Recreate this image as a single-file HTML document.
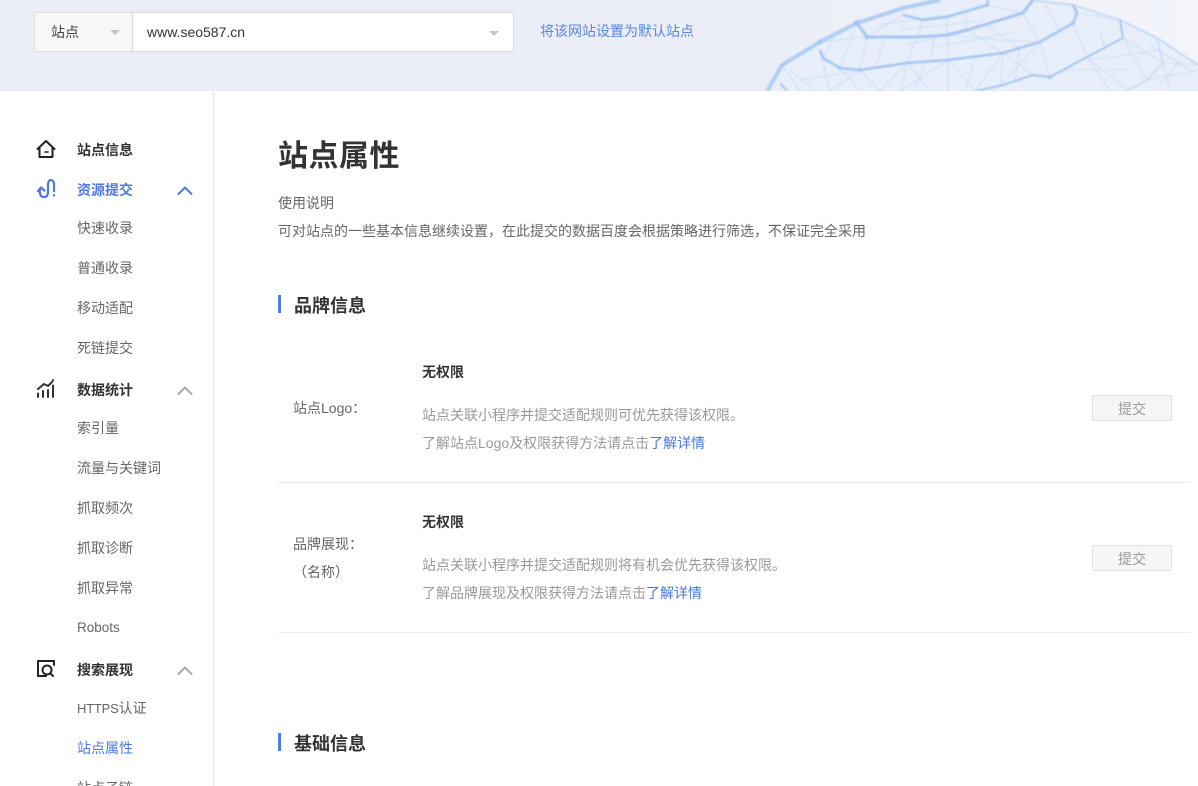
<!DOCTYPE html>
<html lang="zh-CN">
<head>
<meta charset="utf-8">
<title>站点属性</title>
<style>
html{margin:0;padding:0;background:#fff;width:1198px;height:786px;overflow:hidden;}
body{margin:0;padding:0;background:#fff;width:1198px;height:786px;overflow:hidden;position:relative;font-family:"Liberation Sans","Noto Sans CJK SC",sans-serif;font-size:14px;color:#333;}
.t{position:absolute;white-space:nowrap;line-height:20px;height:20px;}
.b{font-weight:700;color:#333;}
.s{color:#666;}
.g{color:#999;}
svg{position:absolute;display:block;}
.tri{position:absolute;width:0;height:0;border-left:5px solid transparent;border-right:5px solid transparent;border-top:5px solid #c4c4c4;}
.hr{position:absolute;left:278px;width:912px;height:1px;background:#ececec;}
.btn{position:absolute;left:1092px;width:78px;height:24px;border:1px solid #e0e0e0;border-radius:2px;background:#f6f6f6;color:#999;text-align:center;line-height:26px;font-size:14px;}
.bar{position:absolute;left:278px;width:3px;height:18px;background:#4a7fe8;}
.h2{font-size:18px;font-weight:700;color:#333;line-height:24px;height:24px;}
.lat{font-size:13px;}
</style>
</head>
<body>
<div style="position:absolute;left:0;top:0;width:1198px;height:91px;background:#eceef7;overflow:hidden;">
<svg width="1198" height="91" style="left:0;top:0">
<defs><linearGradient id="f" x1="0" x2="1" y1="0" y2="0"><stop offset="0" stop-color="#eceef7"/><stop offset="1" stop-color="#f3f5fb"/></linearGradient></defs>
<rect x="740" width="458" height="91" fill="url(#f)"/>
<path d="M767 91L782 65L820 42L857 23L903 8L940 0L1030 0L1073 5L1120 20L1157 38L1198 65V91Z" fill="#e8effa"/>
<g style="filter:blur(0.9px)">
<g stroke="#c6daf5" stroke-width="0.8" fill="none">
<path d="M782 65L800 91M790 70L815 91M820 50L830 91M840 68L860 91M860 70L880 91M907 63L900 91M907 63L930 91M925 62L915 91M948 60L948 91M948 60L975 91M975 57L965 91M1003 53L1000 85M1003 53L1033 75M1020 48L1015 80M1040 42L1050 77M1073 23L1087 57M1087 57L1110 91M1100 30L1105 50M1123 38L1147 80M1163 63L1170 91"/>
<path d="M867 37L860 70M885 37L875 69M917 37L907 63M935 36L930 61M947 35L948 60M967 30L1003 53M985 25L1020 48M1023 13L1040 42M1045 5L1060 30M857 23L840 68M835 35L823 58M903 15L867 37M923 20L917 37M947 17L947 35M965 11L967 30M987 5L1023 13M903 8L903 15M820 42L867 37M1073 5L1077 13M1120 20L1077 13"/>
<path d="M800 80L860 70L830 91M907 63L880 91M948 60L900 91M1003 53L975 91M1040 42L1000 85M1087 57L1050 77M1123 38L1163 63L1198 65M1147 80L1198 70M1087 57L1127 90M907 45L947 35L1003 40L1040 42M880 25L967 12M900 30L985 20M930 48L1010 33M1090 60L1160 50M1060 70L1130 70M1150 45L1190 70M1180 60L1160 85"/>
</g>
<g fill="none" stroke="#a4c6f3" stroke-linejoin="round">
<path stroke-width="4" stroke="#b0cdf4" d="M767 91L782 65L820 42L857 23L903 8L940 0" />
<path stroke-width="2.200" stroke="#c6dbf6" d="M1030 0L1073 5L1120 20L1157 38L1198 65"/>
<path stroke-width="2.600" d="M903 15L923 20L947 17L987 5L988 0"/>
<path stroke-width="3" d="M857 23L867 37L917 37L947 35L967 30L1023 13L1033 0"/>
<path stroke-width="2.600" d="M820 50L823 58L840 68L860 70L907 63L948 60L1003 53L1040 42L1073 23L1077 13L1073 5"/>
<path stroke-width="2" d="M780 83L787 91M977 91L1003 85L1033 75L1050 77L1087 57L1123 38L1120 20"/>
<path stroke-width="1.800" stroke="#c6dbf6" d="M1127 91L1147 80L1163 63L1157 38"/>
</g>
<g fill="#a4c6f3">
<circle cx="782" cy="65" r="2"/><circle cx="820" cy="42" r="2.500"/><circle cx="857" cy="23" r="3"/><circle cx="867" cy="37" r="2.500"/><circle cx="840" cy="68" r="2"/><circle cx="860" cy="70" r="2"/><circle cx="1073" cy="23" r="2"/><circle cx="1050" cy="77" r="2"/><circle cx="987" cy="5" r="2"/>
</g>
</g>
</svg>
</div>
<div style="position:absolute;left:34px;top:12px;width:478px;height:38px;border:1px solid #dcdde3;border-radius:3px;background:#fff;"></div>
<div style="position:absolute;left:35px;top:13px;width:97px;height:38px;background:#f7f7f7;border-right:1px solid #dcdde3;border-radius:3px 0 0 3px;"></div>
<div class="t" style="left:51px;top:22px;color:#444">站点</div>
<div class="tri" style="left:110px;top:30px"></div>
<div class="t" style="left:147px;top:22px;color:#333">www.seo587.cn</div>
<div class="tri" style="left:489px;top:31px"></div>
<div class="t" style="left:540px;top:21px;color:#5a86e0">将该网站设置为默认站点</div>

<div style="position:absolute;left:213px;top:91px;width:1px;height:695px;background:#e6e6e6"></div>

<svg width="214" height="786" viewBox="0 0 214 786" style="left:0;top:0" fill="none" stroke-linecap="round" stroke-linejoin="round">
<g stroke="#222" stroke-width="2">
<path d="M37.500 149L46 141l8.500 8"/><path d="M39.500 148.500V157h13v-8.500"/><path d="M45 152h3" stroke-width="1.600"/>
</g>
<g stroke="#4f78e3" stroke-width="2.200">
<path d="M40.500 188.500c-1.500 3 -1 8 3 8.500c3 .5 4.500-2 4.500-5V184c0-2.500 1.500-4 3-4s3 1.500 3 4v7"/>
<path d="M38 191l3-3.500 3.500 3"/><path d="M54 195v.5"/>
</g>
<g stroke="#333" stroke-width="2">
<path d="M38 389l6-5 4 2 4-4"/><path d="M38 393.500V397M43 391v6M48 390v7M53 385.500V397M53 380v.5"/>
</g>
<g stroke="#222" stroke-width="2">
<path d="M54 665v-4H38v15h8"/><circle cx="47" cy="670" r="4.500"/><path d="M50.500 673.500L53 676"/>
</g>
<path d="M178.500 194l6.500-6.500 6.500 6.500" stroke="#4f78e3" stroke-width="2"/>
<path d="M178.500 394l6.500-6.500 6.500 6.500" stroke="#aaa" stroke-width="2"/>
<path d="M178.500 674l6.500-6.500 6.500 6.500" stroke="#aaa" stroke-width="2"/>
</svg>

<div class="t b" style="left:77px;top:140px">站点信息</div>
<div class="t" style="left:77px;top:180px;font-weight:700;color:#4f78e3">资源提交</div>
<div class="t s" style="left:77px;top:218px">快速收录</div>
<div class="t s" style="left:77px;top:258px">普通收录</div>
<div class="t s" style="left:77px;top:298px">移动适配</div>
<div class="t s" style="left:77px;top:338px">死链提交</div>
<div class="t b" style="left:77px;top:380px">数据统计</div>
<div class="t s" style="left:77px;top:418px">索引量</div>
<div class="t s" style="left:77px;top:458px">流量与关键词</div>
<div class="t s" style="left:77px;top:498px">抓取频次</div>
<div class="t s" style="left:77px;top:538px">抓取诊断</div>
<div class="t s" style="left:77px;top:578px">抓取异常</div>
<div class="t s" style="left:77px;top:618px;font-size:13.500px">Robots</div>
<div class="t b" style="left:77px;top:660px">搜索展现</div>
<div class="t s" style="left:77px;top:698px"><span style="font-size:13px;letter-spacing:-.2px">HTTPS</span>认证</div>
<div class="t" style="left:77px;top:738px;color:#4f78e3">站点属性</div>
<div class="t s" style="left:77px;top:778px">站点子链</div>

<div class="t" style="left:278px;top:138px;font-size:30px;font-weight:700;line-height:38px;height:38px;letter-spacing:.5px;color:#333">站点属性</div>
<div class="t s" style="left:278px;top:193px">使用说明</div>
<div class="t s" style="left:278px;top:221px">可对站点的一些基本信息继续设置，在此提交的数据百度会根据策略进行筛选，不保证完全采用</div>

<div class="bar" style="top:295px"></div>
<div class="t h2" style="left:294px;top:294px">品牌信息</div>

<div class="t s" style="left:293px;top:398px">站点Logo：</div>
<div class="t b" style="left:422px;top:362px">无权限</div>
<div class="t g" style="left:422px;top:405px">站点关联小程序并提交适配规则可优先获得该权限。</div>
<div class="t g" style="left:422px;top:433px">了解站点Logo及权限获得方法请点击<span style="color:#4a78e0">了解详情</span></div>
<div class="btn" style="top:395px">提交</div>
<div class="hr" style="top:482px"></div>

<div class="t s" style="left:293px;top:534px">品牌展现：</div>
<div class="t s" style="left:293px;top:562px">（名称）</div>
<div class="t b" style="left:422px;top:512px">无权限</div>
<div class="t g" style="left:422px;top:555px">站点关联小程序并提交适配规则将有机会优先获得该权限。</div>
<div class="t g" style="left:422px;top:583px">了解品牌展现及权限获得方法请点击<span style="color:#4a78e0">了解详情</span></div>
<div class="btn" style="top:545px">提交</div>
<div class="hr" style="top:632px"></div>

<div class="bar" style="top:733px"></div>
<div class="t h2" style="left:294px;top:732px">基础信息</div>
</body>
</html>
